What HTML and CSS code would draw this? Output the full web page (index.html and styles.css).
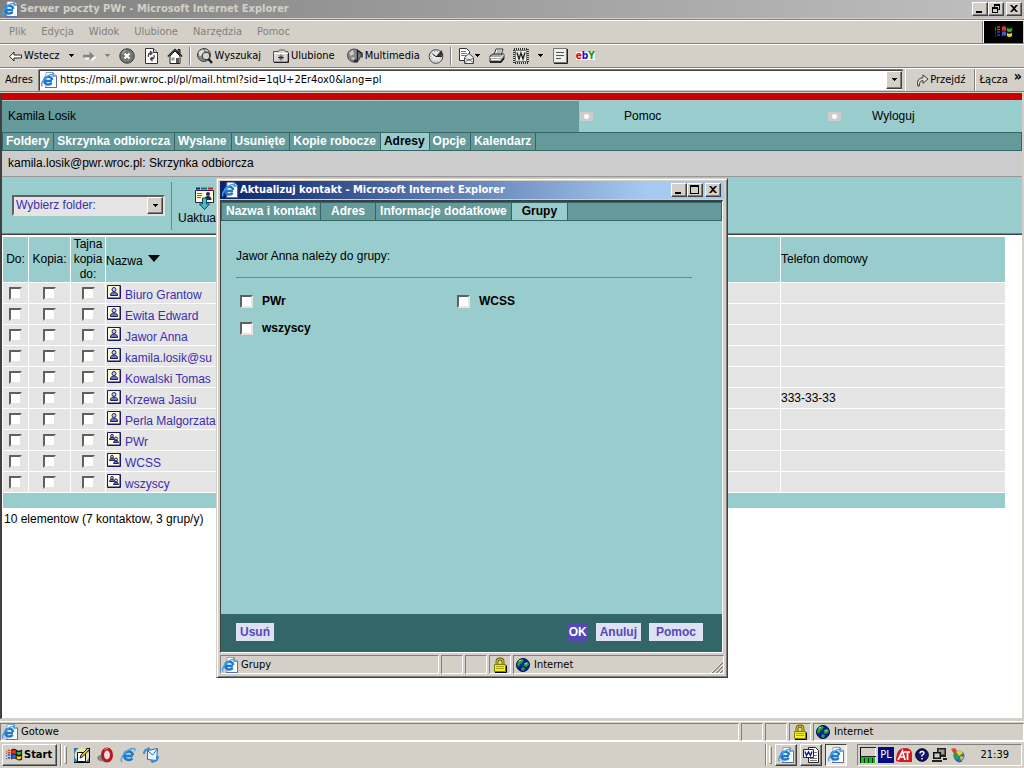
FILE: index.html
```html
<!DOCTYPE html>
<html lang="pl">
<head>
<meta charset="utf-8">
<title>Serwer poczty PWr</title>
<link rel="stylesheet" href="styles.css">
</head>
<body>
<svg class="defs" aria-hidden="true">
  <symbol id="ie" viewBox="0 0 16 16">
    <path d="M5 .5h7l3.500 3.500v11.500h-10.500z" fill="#fff" stroke="#8f9fcc"/>
    <path d="M12 .5v3.500h3.500" fill="#dde4f4" stroke="#555"/>
    <path d="M15.500 4v11.500h-11.500" fill="none" stroke="#5a6fa8"/>
    <path d="M11 9H3.200C3.500 12.800 8.400 13.600 10.800 11M3.200 8C3.800 4 10.600 3.600 11.200 8" fill="none" stroke="#1e78d0" stroke-width="2.400"/>
    <path d="M1.300 14.300C-1.500 11.500 5.500 2.500 11.800 2.400C13 2.800 12.600 4 12 5" fill="none" stroke="#46a0e8" stroke-width="1.400"/>
  </symbol>
  <symbol id="ie-e" viewBox="0 0 16 16">
    <path d="M12.800 9H4.200C4.600 13.200 9.600 14.300 12.400 11.300M4.200 8.200C4.800 3.400 12 3 12.900 8.300" fill="none" stroke="#1e7ad0" stroke-width="2.600"/>
    <path d="M2.200 14.800C-2 13 7 1 14.300 1.600C15.500 2 14.800 3.600 14.400 4.200" fill="none" stroke="#49a4ea" stroke-width="1.400"/>
  </symbol>
  <symbol id="lock" viewBox="0 0 14 16">
    <path d="M4 8V4.500Q4 2 7 2T10 4.500V8" fill="none" stroke="#555000" stroke-width="2.800"/>
    <path d="M4 8V4.500Q4 2 7 2T10 4.500V8" fill="none" stroke="#d8d020" stroke-width="1.200"/>
    <path d="M1.500 7.500h11v7h-11z" fill="#f4f220" stroke="#808000"/>
    <path d="M3 9.500h8M3 11.500h8" stroke="#a8a410"/><path d="M2 15.500h11.500v-7" fill="none" stroke="#000"/>
  </symbol>
  <symbol id="globe" viewBox="0 0 14 14">
    <circle cx="7" cy="7" r="6.500" fill="#0a1a9a" stroke="#001040"/>
    <path d="M2 3l4-2 2 1-2 3-2 1-1 3-2-2zM8 5l4-1 1 3-3 2-2-1zM6 9l3 1-1 3-3-1z" fill="#20a838"/>
    <path d="M3 3l2-1M9 6l2-1" stroke="#a8f0b0"/>
  </symbol>
  <symbol id="person" viewBox="0 0 14 14">
    <path d="M.5.500h13v13H.5z" fill="#fffbd8" stroke="#181868"/><path d="M1 13h12V1" fill="none" stroke="#181868"/>
    <path d="M3.500 10.500V9l2-2h3l2 2v1.500z" fill="#6878c8" stroke="#202060"/>
    <circle cx="7" cy="4.500" r="2" fill="#c8d0f0" stroke="#202060"/>
  </symbol>
  <symbol id="people" viewBox="0 0 14 14">
    <path d="M.5.500h13v13H.5z" fill="#fffbd8" stroke="#181868"/><path d="M1 13h12V1" fill="none" stroke="#181868"/>
    <path d="M2.500 7.500l1-2h3l1 2z" fill="#6878c8" stroke="#202060"/><circle cx="5" cy="3.800" r="1.400" fill="#c8d0f0" stroke="#202060"/>
    <path d="M6.500 10.500l1-2h3l1 2z" fill="#6878c8" stroke="#202060"/><circle cx="9" cy="6.500" r="1.500" fill="#c8d0f0" stroke="#202060"/>
  </symbol>
  <symbol id="down" viewBox="0 0 7 4"><path d="M1 0h5v1H5v1H4v1H3V2H2V1H1z" fill="currentColor"/></symbol>
  <symbol id="min" viewBox="0 0 12 10"><path d="M2 7h6v2H2z"/></symbol>
  <symbol id="max" viewBox="0 0 12 10"><path d="M1 0h9v9H1zM2 2v6h7V2z" fill-rule="evenodd"/></symbol>
  <symbol id="restore" viewBox="0 0 12 10"><path d="M4 0h6v6H8V5h1V2H5v1H4zM2 3h6v6H2zM3 5v3h4V5z" fill-rule="evenodd"/></symbol>
  <symbol id="close" viewBox="0 0 12 10"><path d="M2 1h2l2 2 2-2h2L7 4.500 10 8H8L6 6 4 8H2l3-3.500z"/></symbol>
  <symbol id="flag" viewBox="0 0 20 16">
    <path d="M7 2Q10 0 13 2.500Q16 4 19 2V13Q16 15 13 13Q10 11 7 13z" fill="#111"/>
    <path d="M8 3q2-1.500 4 0v4q-2-1.500-4 0z" fill="#e83820"/><path d="M13 4q2 1.500 5 0v3q-3 2-5 0z" fill="#38b030"/>
    <path d="M8 8q2-1.500 4 0v4q-2-1.500-4 0z" fill="#3060d8"/><path d="M13 9q2 1.500 5 0v3q-3 2-5 0z" fill="#f0d020"/>
    <path d="M1 4h1M3 3h3M1 6h1M3 5.500h3" stroke="#e83820" stroke-width="1.500"/><path d="M1 9h1M3 8h3M1 12h1M3 11h3" stroke="#2848c0" stroke-width="1.500"/>
  </symbol>
</svg>

<main class="browser">
  <header class="titlebar">
    <svg class="i16"><use href="#ie"/></svg>
    <h1>Serwer poczty PWr - Microsoft Internet Explorer</h1>
    <div class="winbtns">
      <button aria-label="Minimalizuj"><svg><use href="#min"/></svg></button>
      <button aria-label="Przywróć"><svg><use href="#restore"/></svg></button>
      <button class="last" aria-label="Zamknij"><svg><use href="#close"/></svg></button>
    </div>
  </header>
  <nav class="menubar">
    <button>Plik</button><button>Edycja</button><button>Widok</button><button>Ulubione</button><button>Narzędzia</button><button>Pomoc</button>
    <span class="throbber"><svg viewBox="0 0 20 16"><use href="#flag"/></svg></span>
  </nav>
  <div class="toolbar">
    <button><svg class="w13" viewBox="0 0 13 11"><path d="M.7 5.500L5 1v3h7.500v3H5v3z" fill="#fff" stroke="#222"/></svg>Wstecz</button>
    <button class="drop" aria-label="Historia wstecz"><svg><use href="#down"/></svg></button>
    <button aria-label="Dalej"><svg class="w13" viewBox="0 0 14 12"><path d="M1 5h7V1.500l5 4.500-5 4.500V8H1z" fill="#fff" transform="translate(1 1)"/><path d="M0 4h7V.5L12.500 5.500 7 10V7H0z" fill="#858585"/></svg></button>
    <button class="drop off" aria-label="Historia dalej"><svg><use href="#down"/></svg></button>
    <button aria-label="Zatrzymaj"><svg class="i16" viewBox="0 0 16 16"><circle cx="8" cy="8" r="7.200" fill="#777" stroke="#333"/><path d="M3 6q1-3 4-4" stroke="#bbb" fill="none"/><path d="M5.500 5.500l5 5M10.500 5.500l-5 5" stroke="#fff" stroke-width="2"/></svg></button>
    <button aria-label="Odśwież"><svg class="i16" viewBox="0 0 16 16"><path d="M2.500.5h8l4 4v11h-12z" fill="#fff" stroke="#333"/><path d="M10.500.5v4h4" fill="#ccc" stroke="#333"/><path d="M5.500 9q-1-4 3-4M7 3l2.200 2L7 7M11 7q1 4-3 4M9.500 9L7.500 11l2 2" fill="none" stroke="#444" stroke-width="1.300"/></svg></button>
    <button aria-label="Strona główna"><svg class="i16" viewBox="0 0 16 16"><path d="M11 1.500h2v5l-2-2z" fill="#777" stroke="#222"/><path d="M3 8v7.500h10V8L8 3z" fill="#fff" stroke="#222"/><path d="M.8 8.500L8 1.500l7.200 7" fill="none" stroke="#222" stroke-width="1.400"/><path d="M9 10h3v5H9z" fill="#555"/><path d="M4.500 9.500h3v3h-3z" fill="#999"/></svg></button>
    <i class="sep"></i>
    <button><svg class="i16" viewBox="0 0 16 16"><circle cx="7" cy="7" r="6.500" fill="#888" stroke="#444"/><path d="M2 4l4-2 1 3-4 3zM8 2l3 1" fill="#ddd" stroke="#ddd"/><circle cx="9" cy="8" r="3.800" fill="#d4d4d4" stroke="#333"/><path d="M11.500 11l3.500 4" stroke="#222" stroke-width="2.400"/></svg>Wyszukaj</button>
    <button class="wide"><svg class="i16" viewBox="0 0 16 16"><path d="M.5 3.500h5l1-1.500h5l1 1.500h2.500v10.500H.5z" fill="#d8d8d8" stroke="#555"/><path d="M1 5.500h14" stroke="#fff"/><path d="M8 6.500v6M5 9.500h6M6 7.500l4 4M10 7.500l-4 4" stroke="#333"/><path d="M1 14.500h14.500V5" stroke="#222" fill="none"/></svg>Ulubione</button>
    <button class="wide"><svg class="i16" viewBox="0 0 16 16"><circle cx="7" cy="7.500" r="6.500" fill="#888" stroke="#444"/><path d="M2 5l4-3 1 4-3 2zM4 10l3-1 1 4z" fill="#ccc"/><path d="M10.500 13V2.500l4.500 3v4" fill="none" stroke="#222" stroke-width="1.500"/><ellipse cx="9" cy="13" rx="2.500" ry="1.800" fill="#333"/></svg>Multimedia</button>
    <button aria-label="Historia"><svg class="i16" viewBox="0 0 16 16"><circle cx="8" cy="8.500" r="6.800" fill="#e8e8e8" stroke="#444"/><circle cx="8" cy="8.500" r="5" fill="none" stroke="#777" stroke-dasharray="1 2"/><path d="M8 8.500L13.500 2l1.800 5.500z" fill="#333"/><path d="M8 8.500L4.500 6M8 8.500h6" stroke="#222"/></svg></button>
    <i class="sep"></i>
    <button class="tight" aria-label="Poczta"><svg class="i16" viewBox="0 0 16 16"><path d="M1.500.5h7l3 3v9h-10z" fill="#fff" stroke="#333"/><path d="M3 3.500h5M3 5.500h6M3 7.500h5" stroke="#777"/><path d="M6.500 9.500L11 5.500l4.500 4v6h-9z" fill="#eee" stroke="#444"/><path d="M6.500 15l4.500-4 4.500 4M6.500 10l4.500 2.500 4.500-2.500" fill="none" stroke="#777"/></svg><svg class="arrow"><use href="#down"/></svg></button>
    <button aria-label="Drukuj"><svg class="i16" viewBox="0 0 16 16"><path d="M5 7l2-6h7l-2 6z" fill="#fff" stroke="#333"/><path d="M8 3h4M7.500 5h4" stroke="#777"/><path d="M1 8l3-2h11v4l-3 4H1z" fill="#aaa" stroke="#333"/><path d="M1 9.500h11l3-3M2 11.500h9" stroke="#fff" fill="none"/><path d="M1 14h11l3-4" stroke="#111" stroke-width="1.500" fill="none"/></svg></button>
    <button aria-label="Edytuj w programie Word"><svg class="i16" viewBox="0 0 16 16"><path d="M1 1h14v14H1z" fill="#d4d0c8" stroke="#333" stroke-width="2" stroke-dasharray="1 1"/><path d="M2.500 2.500h11v11h-11z" fill="#eee" stroke="#777"/><path d="M4 4.500l2 6.500L8 5l2 6 2-6.500" fill="none" stroke="#222" stroke-width="1.400"/></svg></button>
    <button class="drop" aria-label="Edytory"><svg><use href="#down"/></svg></button>
    <button aria-label="Dyskusja"><svg class="i16" viewBox="0 0 16 16"><path d="M1.500.5h13v14h-13z" fill="#eee" stroke="#777"/><path d="M2 15.500h13.500V1" fill="none" stroke="#222"/><path d="M4 4.500h8M4 7.500h8M4 10.500h5" stroke="#555"/></svg></button>
    <button class="eby" aria-label="ebY"><b>e</b><b>b</b><b>Y</b></button>
  </div>
  <form class="address">
    <label for="url">Adres</label>
    <div class="urlbox">
      <svg class="i16"><use href="#ie"/></svg>
      <input id="url" type="text" value="https://mail.pwr.wroc.pl/pl/mail.html?sid=1qU+2Er4ox0&amp;lang=pl">
      <button type="button" class="combo" aria-label="Rozwiń"><svg><use href="#down"/></svg></button>
    </div>
    <button type="button" class="go"><svg class="w13" viewBox="0 0 13 14"><path d="M1.500 13Q-.5 4.500 7 4V1l5.500 4.500L7 10V7Q3 7 3 13z" fill="#ddd" stroke="#333"/></svg>Przejdź</button>
    <button type="button" class="links">Łącza <span>»</span></button>
  </form>

  <div class="page">
    <div class="redline"></div>
    <div class="userbar">
      <div class="user">Kamila Losik</div>
      <a href="#"><i></i>Pomoc</a>
      <a href="#"><i></i>Wyloguj</a>
    </div>
    <nav class="tabs">
      <a href="#">Foldery</a><a href="#">Skrzynka odbiorcza</a><a href="#">Wysłane</a><a href="#">Usunięte</a><a href="#">Kopie robocze</a><a href="#" class="on">Adresy</a><a href="#">Opcje</a><a href="#">Kalendarz</a>
    </nav>
    <div class="crumb">kamila.losik@pwr.wroc.pl: Skrzynka odbiorcza</div>
    <div class="actions">
      <div class="selectbox">
        <select aria-label="Wybierz folder"><option>Wybierz folder:</option></select>
        <span class="combo"><svg><use href="#down"/></svg></span>
      </div>
      <button class="update"><svg viewBox="0 0 20 24"><path d="M1.500 3.500h18v12h-18z" fill="#fffbd0" stroke="#202060"/><path d="M2 1.500h4" stroke="#202060" stroke-width="2"/><path d="M7 1.500h6" stroke="#207070" stroke-width="2"/><path d="M14 1.500h5" stroke="#d02020" stroke-width="2"/><path d="M3 6.500h5M3 8.500h5M3 10.500h4" stroke="#5060c0"/><circle cx="14" cy="7" r="2" fill="#282860"/><path d="M10.500 13q0-4 3.500-4t3.500 4z" fill="#282860"/><path d="M8.500 11h4v6h3l-5 5.500-5-5.500h3z" fill="#50b8c0" stroke="#104858"/></svg>Uaktua</button>
    </div>
    <div class="content">
      <table class="contacts">
        <colgroup><col class="c1"><col class="c2"><col class="c3"><col class="c4"><col class="c5"></colgroup>
        <thead><tr><th>Do:</th><th>Kopia:</th><th>Tajna kopia do:</th><th class="l name">Nazwa <svg class="sort" viewBox="0 0 12 7"><path d="M0 0h12L6 7z"/></svg></th><th class="l">Telefon domowy</th></tr></thead>
        <tbody>
          <tr><td><input type="checkbox" aria-label="Do"></td><td><input type="checkbox" aria-label="Kopia"></td><td><input type="checkbox" aria-label="Tajna kopia"></td><td class="l"><a href="#"><svg><use href="#person"/></svg>Biuro Grantow</a></td><td class="l"></td></tr>
          <tr><td><input type="checkbox" aria-label="Do"></td><td><input type="checkbox" aria-label="Kopia"></td><td><input type="checkbox" aria-label="Tajna kopia"></td><td class="l"><a href="#"><svg><use href="#person"/></svg>Ewita Edward</a></td><td class="l"></td></tr>
          <tr><td><input type="checkbox" aria-label="Do"></td><td><input type="checkbox" aria-label="Kopia"></td><td><input type="checkbox" aria-label="Tajna kopia"></td><td class="l"><a href="#"><svg><use href="#person"/></svg>Jawor Anna</a></td><td class="l"></td></tr>
          <tr><td><input type="checkbox" aria-label="Do"></td><td><input type="checkbox" aria-label="Kopia"></td><td><input type="checkbox" aria-label="Tajna kopia"></td><td class="l"><a href="#"><svg><use href="#person"/></svg>kamila.losik@su</a></td><td class="l"></td></tr>
          <tr><td><input type="checkbox" aria-label="Do"></td><td><input type="checkbox" aria-label="Kopia"></td><td><input type="checkbox" aria-label="Tajna kopia"></td><td class="l"><a href="#"><svg><use href="#person"/></svg>Kowalski Tomas</a></td><td class="l"></td></tr>
          <tr><td><input type="checkbox" aria-label="Do"></td><td><input type="checkbox" aria-label="Kopia"></td><td><input type="checkbox" aria-label="Tajna kopia"></td><td class="l"><a href="#"><svg><use href="#person"/></svg>Krzewa Jasiu</a></td><td class="l">333-33-33</td></tr>
          <tr><td><input type="checkbox" aria-label="Do"></td><td><input type="checkbox" aria-label="Kopia"></td><td><input type="checkbox" aria-label="Tajna kopia"></td><td class="l"><a href="#"><svg><use href="#person"/></svg>Perla Malgorzata</a></td><td class="l"></td></tr>
          <tr><td><input type="checkbox" aria-label="Do"></td><td><input type="checkbox" aria-label="Kopia"></td><td><input type="checkbox" aria-label="Tajna kopia"></td><td class="l"><a href="#"><svg><use href="#people"/></svg>PWr</a></td><td class="l"></td></tr>
          <tr><td><input type="checkbox" aria-label="Do"></td><td><input type="checkbox" aria-label="Kopia"></td><td><input type="checkbox" aria-label="Tajna kopia"></td><td class="l"><a href="#"><svg><use href="#people"/></svg>WCSS</a></td><td class="l"></td></tr>
          <tr><td><input type="checkbox" aria-label="Do"></td><td><input type="checkbox" aria-label="Kopia"></td><td><input type="checkbox" aria-label="Tajna kopia"></td><td class="l"><a href="#"><svg><use href="#people"/></svg>wszyscy</a></td><td class="l"></td></tr>
        </tbody>
        <tfoot><tr><td colspan="5"></td></tr></tfoot>
      </table>
      <p class="count">10 elementow (7 kontaktow, 3 grup/y)</p>
    </div>
  </div>

  <footer class="status">
    <span class="pane grow"><svg class="i16"><use href="#ie"/></svg>Gotowe</span>
    <span class="pane small"></span><span class="pane small"></span>
    <span class="pane small"><svg class="lock"><use href="#lock"/></svg></span>
    <span class="pane zone"><svg class="globe"><use href="#globe"/></svg>Internet</span>
  </footer>
</main>

<section class="dialog" role="dialog" aria-labelledby="dlg-title">
  <header class="titlebar active">
    <svg class="i16"><use href="#ie"/></svg>
    <h2 id="dlg-title">Aktualizuj kontakt - Microsoft Internet Explorer</h2>
    <div class="winbtns">
      <button aria-label="Minimalizuj"><svg><use href="#min"/></svg></button>
      <button aria-label="Maksymalizuj"><svg><use href="#max"/></svg></button>
      <button class="last" aria-label="Zamknij"><svg><use href="#close"/></svg></button>
    </div>
  </header>
  <div class="client">
    <nav class="tabs">
      <a href="#">Nazwa i kontakt</a><a href="#" class="pad">Adres</a><a href="#">Informacje dodatkowe</a><a href="#" class="on pad">Grupy</a>
    </nav>
    <form class="groups">
      <p>Jawor Anna należy do grupy:</p>
      <div class="grid">
        <label><input type="checkbox">PWr</label>
        <label><input type="checkbox">WCSS</label>
        <label><input type="checkbox">wszyscy</label>
      </div>
    </form>
    <div class="buttons">
      <button class="del">Usuń</button>
      <button class="ok">OK</button>
      <button>Anuluj</button>
      <button class="help">Pomoc</button>
    </div>
  </div>
  <footer class="status">
    <span class="pane grow"><svg class="i16"><use href="#ie"/></svg>Grupy</span>
    <span class="pane small"></span><span class="pane small"></span>
    <span class="pane small"><svg class="lock"><use href="#lock"/></svg></span>
    <span class="pane zone"><svg class="globe"><use href="#globe"/></svg>Internet<svg class="grip" viewBox="0 0 12 12"><path d="M1 12L12 1M5 12l7-7M9 12l3-3" stroke="#808080" stroke-width="1.600"/><path d="M0 12L12 0M4 12l8-8M8 12l4-4" stroke="#fff" stroke-width=".8"/></svg></span>
  </footer>
</section>

<footer class="taskbar">
  <button class="start"><svg viewBox="0 0 20 16"><use href="#flag"/></svg>Start</button>
  <i class="sep"></i><i class="handle"></i>
  <div class="quick">
    <button aria-label="Pokaż pulpit"><svg class="i16" viewBox="0 0 16 16"><path d="M0 1h16v14H0z" fill="#2a7ab0"/><circle cx="8" cy="8" r="7.500" fill="#e8e4b0"/><path d="M3.500 5.500h8v9h-8z" fill="#fff" stroke="#111"/><path d="M6 11l1-3L14 1l1.500 1.500L9 9.500z" fill="#f0c020" stroke="#222"/><path d="M0 15.500h15.500V1" fill="none" stroke="#000"/></svg></button>
    <button aria-label="Opera"><svg class="i16" viewBox="0 0 16 16"><ellipse cx="6" cy="11" rx="6" ry="3.500" fill="#888"/><ellipse cx="10" cy="8" rx="4.500" ry="6" fill="#e8e0e0" stroke="#b81824" stroke-width="3"/><path d="M7 3q2-2 4-1.500" stroke="#f08080" fill="none"/></svg></button>
    <button aria-label="Internet Explorer"><svg class="i16"><use href="#ie-e"/></svg></button>
    <button aria-label="Outlook Express"><svg class="i16" viewBox="0 0 16 16"><path d="M4.500 3.500l10-2-1 12-9-1z" fill="#e8f4ff" stroke="#2a6ab8"/><path d="M5 4l4.500 4 5-6" fill="none" stroke="#2a6ab8"/><path d="M1 7q0-5 5-5l-1-1.500M15 9q0 6-6 5.500l1 1.500" fill="none" stroke="#3a8ad8" stroke-width="2"/></svg></button>
  </div>
  <i class="sep push"></i><i class="handle"></i>
  <button class="task" aria-label="Serwer poczty PWr"><svg class="i16"><use href="#ie"/></svg></button>
  <button class="task" aria-label="Word"><svg class="i16" viewBox="0 0 16 16"><path d="M5.500.5h7l3 3v12h-10z" fill="#fff" stroke="#222"/><path d="M11 5.500h3M11 8.500h3M7 11.500h7M7 13.500h7" stroke="#777"/><path d="M.5 2.500h10v8H.5z" fill="#fff" stroke="#102080"/><path d="M2 4.500l1.500 4L5.500 5l2 3.500L9 4.500" fill="none" stroke="#102080" stroke-width="1.400"/></svg></button>
  <button class="task pressed" aria-label="Aktualizuj kontakt"><svg class="i16"><use href="#ie"/></svg></button>
  <div class="tray">
    <svg class="i16" viewBox="0 0 16 16"><path d="M.5 0v16" stroke="#000"/><path d="M15.500 0v16" stroke="#fff"/><path d="M0 9.500h16M0 .5h16" stroke="#222"/><path d="M1 10h14v6H1z" fill="#10c020"/><path d="M4.500 11v5M8.500 11v5M12.500 11v5" stroke="#043008"/></svg>
    <span class="lang">PL</span>
    <svg class="i16" viewBox="0 0 16 16"><path d="M0 14q0-13 9-13 6 0 7 5v9H4z" fill="#d81820"/><path d="M2 13L6.500 4l2.500 9M4 10h4M8 5h6M11.500 5v8" stroke="#fff" stroke-width="1.700" fill="none"/></svg>
    <svg class="i16" viewBox="0 0 16 16"><circle cx="8" cy="8" r="6.300" fill="#0c1470" stroke="#000"/><path d="M6 6.500q0-2 2-2t2 1.800q0 1-2 2V9.500M8 11v1.500" stroke="#fff" stroke-width="1.400" fill="none"/></svg>
    <svg class="i16" viewBox="0 0 16 16"><path d="M5 1h9v9H5z" fill="#222"/><path d="M6.500 2.500h6v5h-6z" fill="#999"/><path d="M1 5h8v7H1z" fill="#111"/><path d="M2.500 6.500h5v4h-5z" fill="#ccc"/><path d="M0 14h10M11 12h4" stroke="#222" stroke-width="2"/></svg>
    <svg class="i16" viewBox="0 0 16 16"><circle cx="9" cy="9" r="5.500" fill="#2878c0"/><path d="M1 2l4-1 2 3-3 3z" fill="#e04030"/><path d="M6 5l4-2 3 3-4 3z" fill="#f0d020"/><path d="M3 8l4-1 2 4-4 2z" fill="#20a040"/><path d="M10 9l4 1-3 4z" fill="#f0c020"/><path d="M6 13l3 2 3-1" stroke="#204070" fill="none"/></svg>
    <time>21:39</time>
  </div>
</footer>
</body>
</html>
```

FILE: styles.css
```css
* { box-sizing: border-box; }

body {
  margin: 0;
  min-height: 100vh;
  display: flex;
  flex-direction: column;
  position: relative;
  background: #d4d0c8;
  color: #000;
  font: 11px/14px "DejaVu Sans Condensed", "DejaVu Sans", sans-serif;
}

button {
  display: flex;
  align-items: center;
  padding: 0;
  border: 0;
  background: none;
  color: inherit;
  font: inherit;
  white-space: nowrap;
}

svg { display: block; flex: none; }
.defs { position: absolute; width: 0; height: 0; }
.i16 { width: 16px; height: 16px; }
.w13 { width: 13px; height: 13px; }

.browser { flex: 1; display: flex; flex-direction: column; }

/* Title bars */
.titlebar {
  display: flex;
  align-items: center;
  gap: 2px;
  height: 18px;
  padding: 0 2px;
  background: linear-gradient(90deg, #808080, #c0c0c0);
  color: #d4d0c8;
}
.titlebar.active { background: linear-gradient(90deg, #0a246a, #a6caf0 85%); color: #fff; }
.titlebar h1, .titlebar h2 { margin: 0; font-size: 11px; line-height: 14px; white-space: nowrap; }
.winbtns { display: flex; margin-left: auto; }
.winbtns button, .combo {
  justify-content: center;
  width: 16px;
  height: 14px;
  background: #d4d0c8;
  border: 1px solid;
  border-color: #fff #404040 #404040 #fff;
  box-shadow: inset -1px -1px #808080;
  color: #000;
}
.winbtns svg { width: 12px; height: 10px; }
.winbtns .last { margin-left: 2px; }
.dialog .winbtns { margin-right: 1px; }

/* Menu and toolbars */
.menubar {
  display: flex;
  align-items: stretch;
  gap: 15px;
  height: 25px;
  margin-top: 1px;
  padding-left: 9px;
  border: solid #808080;
  border-width: 1px 0;
  box-shadow: inset 0 1px #fff;
  color: #808080;
}
.throbber {
  display: grid;
  place-items: center;
  width: 39px;
  margin: 1px 1px 0 auto;
  background: #000;
  box-shadow: -1px 0 #fff, -2px 0 #808080;
}
.throbber svg { width: 20px; height: 16px; }

.toolbar {
  display: flex;
  align-items: center;
  gap: 8px;
  height: 24px;
  padding-left: 9px;
  border-top: 1px solid #fff;
  border-bottom: 1px solid #808080;
}
.toolbar button { gap: 2px; }
.toolbar .wide { margin-left: 4px; }
.toolbar .tight { gap: 0; }
.drop svg, .arrow { width: 7px; height: 4px; }
.off { color: #808080; }
.toolbar .sep { margin: 0 -2px; }
.sep { width: 2px; height: 18px; border-left: 1px solid #808080; border-right: 1px solid #fff; }
.toolbar .eby { gap: 0; background: #fff; font-size: 10px; line-height: 8px; }
.eby b:nth-child(1) { color: #e00000; }
.eby b:nth-child(2) { color: #1010d0; }
.eby b:nth-child(3) { color: #10a010; }

.address {
  display: flex;
  align-items: center;
  height: 24px;
  margin: 0;
  padding-left: 5px;
  border-top: 1px solid #fff;
  border-bottom: 1px solid #808080;
}
.urlbox {
  flex: 1;
  display: flex;
  align-items: center;
  height: 21px;
  margin-left: 6px;
  padding-left: 1px;
  background: #fff;
  border: 1px solid;
  border-color: #404040 #d4d0c8 #d4d0c8 #404040;
  box-shadow: 0 -1px #808080, -1px 0 #808080;
}
.urlbox input { flex: 1; min-width: 0; border: 0; padding: 0 3px; background: none; font: inherit; color: #000; }
.combo { display: flex; align-items: center; height: 18px; }
.combo svg { width: 7px; height: 4px; }
.go { gap: 1px; height: 22px; padding: 0 8px 0 10px; margin-left: 2px; border-left: 1px solid #fff; border-right: 1px solid #808080; }
.links { gap: 6px; align-self: stretch; padding: 0 2px 0 4px; border-left: 1px solid #fff; }
.links span { align-self: flex-start; font-size: 14px; font-weight: bold; line-height: 14px; }

/* Web page */
.page {
  flex: 1;
  margin: 1px 2px 0 0;
  border: 1px solid;
  border-color: #404040 #fff #d4d0c8 #404040;
  border-left-width: 2px;
  border-right-width: 0;
  background: #fff;
  font: 12px/15px "Liberation Sans", Arial, sans-serif;
}
.page a { text-decoration: none; color: #3a2eb0; }
.redline { height: 7px; background: #c00; border-bottom: 1px solid #9cc; }
.userbar { display: grid; grid-template-columns: 577fr 248fr 195fr; height: 31px; background: #9cc; }
.user { display: flex; align-items: center; padding-left: 6px; background: #699; }
.page .userbar a { display: flex; align-items: center; gap: 31px; padding-left: 1px; color: #000; }
.userbar i {
  width: 13px;
  height: 9px;
  background: radial-gradient(circle, #fff 2px, #ccc 3px);
}

.tabs { display: flex; height: 19px; background: #699; border: 1px solid #366; font: bold 12px/17px "Liberation Sans", Arial, sans-serif; }
.tabs a { padding: 0 4px; border-right: 1px solid #366; color: #fff; text-decoration: none; white-space: nowrap; }
.page .tabs a { padding: 0 4px 0 3px; color: #fff; }
.tabs a.on, .page .tabs a.on { background: #9cc; color: #000; }
.tabs a.pad { padding: 0 10px; }

.crumb { height: 26px; padding: 5px 6px; background: #ccc; border-bottom: 1px solid #999; }
.actions {
  display: flex;
  align-items: center;
  height: 58px;
  padding-left: 10px;
  background: #9cc;
  border-bottom: 1px solid #404040;
  box-shadow: inset 0 -1px #808080;
}
.selectbox { position: relative; width: 153px; }
select {
  appearance: none;
  width: 100%;
  height: 21px;
  padding: 0 2px;
  border: 2px solid;
  border-color: #606060 #e8e4dc #e8e4dc #606060;
  border-radius: 0;
  background: #e5e5e5;
  color: #3a2eb0;
  font: inherit;
}
.selectbox .combo { position: absolute; right: 2px; top: 2px; height: 17px; pointer-events: none; }
.update {
  flex-direction: column;
  align-items: flex-start;
  gap: 0;
  height: 48px;
  margin-left: 6px;
  padding: 5px 0 0 6px;
  border-left: 1px solid #808080;
}
.update svg { width: 20px; height: 24px; margin-left: 16px; }

.contacts { width: calc(100% - 16px); border-spacing: 1px; table-layout: fixed; margin-top: 1px; }
.c1 { width: 25px; }
.c2 { width: 41px; }
.c3 { width: 34px; }
.c5 { width: 224px; }
.contacts th { height: 45px; padding: 0; background: #9cc; font-weight: normal; }
.contacts td { height: 20px; padding: 0; background: #e5e5e5; text-align: center; }
.contacts .l { text-align: left; }
.contacts .name { padding-top: 4px; }
.contacts td a { display: flex; align-items: flex-end; gap: 4px; height: 20px; padding-left: 1px; white-space: nowrap; }
.contacts td svg { width: 14px; height: 14px; align-self: flex-start; margin-top: 2px; }
.sort { display: inline-block; width: 12px; height: 7px; margin-left: 2px; vertical-align: 3px; }
.contacts tfoot td { height: 15px; background: #9cc; }
.count { margin: 3px 2px; }

input[type="checkbox"] {
  appearance: none;
  display: block;
  width: 13px;
  height: 13px;
  margin: 0 auto;
  background: #fff;
  border: 2px solid;
  border-color: #606060 #e8e4dc #e8e4dc #606060;
}

/* Status bars */
.status { display: flex; gap: 2px; height: 20px; padding-top: 1px; margin-top: 2px; border-top: 1px solid #fff; }
.pane {
  display: flex;
  align-items: center;
  gap: 4px;
  width: 22px;
  border: 1px solid;
  border-color: #808080 #fff #fff #808080;
}
.pane.grow { flex: 1; padding-left: 1px; gap: 3px; }
.pane.zone { width: 211px; padding-left: 2px; gap: 4px; }
.small .lock { margin: 0 auto; }
.lock { width: 14px; height: 16px; }
.globe { width: 14px; height: 14px; }

/* Contact dialog, floating over the page */
.dialog {
  position: absolute;
  left: 216px;
  top: 178px;
  width: 512px;
  height: 500px;
  display: flex;
  flex-direction: column;
  padding: 2px;
  background: #d4d0c8;
  border: 1px solid;
  border-color: #d4d0c8 #404040 #404040 #d4d0c8;
  box-shadow: inset 1px 1px #fff, inset -1px -1px #808080;
}
.dialog .titlebar { margin: 0 1px; }
.dialog .client {
  flex: 1;
  display: flex;
  flex-direction: column;
  margin: 1px 2px 0 1px;
  border: 1px solid;
  border-color: #404040 #fff #fff #404040;
  border-top-width: 2px;
  background: #9cc;
  font: 12px/15px "Liberation Sans", Arial, sans-serif;
}
.groups { flex: 1; padding: 28px 30px 0 15px; }
.groups p { margin: 0 0 16px; padding-bottom: 13px; border-bottom: 1px solid #808080; }
.grid { display: grid; grid-template-columns: 217px 1fr; row-gap: 12px; padding-left: 4px; }
.grid label { display: flex; align-items: center; gap: 9px; font-weight: bold; }
.grid input[type="checkbox"] { margin: 0; }
.buttons { display: flex; align-items: center; gap: 8px; height: 38px; padding: 0 19px 2px 15px; background: #366; }
.buttons button { height: 18px; padding: 0 4px; background: #e0e0f5; color: #5548b8; font-weight: bold; }
.buttons .del { margin-right: auto; }
.buttons .ok { padding: 0 1px; background: #5548b8; color: #fff; }
.buttons .help { padding: 0 7px; }
.dialog .status { height: 22px; margin: 0 1px; padding: 2px 0 1px; border: 0; }
.grip { width: 12px; height: 12px; margin-left: auto; align-self: flex-end; }

/* Taskbar */
.taskbar { display: flex; align-items: center; height: 27px; padding: 0 2px; border-top: 1px solid #fff; }
.start, .task {
  height: 22px;
  border: 1px solid;
  border-color: #fff #404040 #404040 #fff;
  box-shadow: inset -1px -1px #808080;
}
.start { gap: 1px; padding: 0 4px 0 2px; font-weight: bold; }
.start svg { width: 18px; height: 16px; }
.taskbar .sep { margin-left: 3px; height: 22px; }
.handle { width: 3px; height: 18px; margin-left: 2px; border: 1px solid; border-color: #fff #808080 #808080 #fff; }
.quick { display: flex; gap: 7px; margin-left: 7px; }
.taskbar .push { margin-left: auto; }
.task { justify-content: center; width: 22px; margin-left: 3px; }
.task.pressed { background: #eceae5; border-color: #404040 #fff #fff #404040; box-shadow: none; }
.tray {
  display: flex;
  align-items: center;
  gap: 2px;
  width: 165px;
  height: 22px;
  margin-left: 10px;
  padding: 0 12px 0 2px;
  border: 1px solid;
  border-color: #808080 #fff #fff #808080;
}
.lang { width: 16px; background: #000c80; color: #fff; text-align: center; line-height: 16px; }
.tray time { margin-left: auto; }
```
